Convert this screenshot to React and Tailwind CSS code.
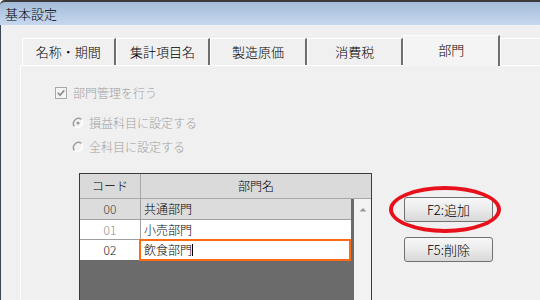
import React from "react";

function Tab({ w, label, selected }) {
  if (selected) {
    return (
      <div className={`${w} h-[31px] -mb-px relative z-10 bg-[#f4f4f4] border-t border-l border-white border-r-2 border-r-[#6e6e6e] flex items-start justify-center pt-[6px] text-[13px] leading-[16px]`}>
        {label}
      </div>
    );
  }
  return (
    <div className={`${w} h-[27px] bg-[#f0f0f0] border-t border-l border-white border-r-2 border-r-[#6e6e6e] flex items-center justify-center text-[13px] leading-[16px]`}>
      {label}
    </div>
  );
}

function Radio({ checked }) {
  return (
    <svg width="12" height="12" viewBox="0 0 12 12" className="shrink-0">
      <circle cx="6" cy="6" r="5" fill="#f4f4f4" />
      <path d="M9.5 2.5 A5 5 0 0 0 2.5 9.5" fill="none" stroke="#9a9a9a" strokeWidth="1.4" />
      <path d="M2.5 9.5 A5 5 0 0 0 9.5 2.5" fill="none" stroke="#ffffff" strokeWidth="1.2" />
      {checked && <circle cx="6" cy="6" r="1.6" fill="#9a9a9a" />}
    </svg>
  );
}

export default function App() {
  return (
    <div className="w-[540px] h-[300px] overflow-hidden bg-[#f0f0f0] flex flex-col font-['Noto_Sans_CJK_JP','Liberation_Sans',sans-serif] font-light text-[12px] text-black">
      {/* Title bar */}
      <div className="h-[25px] shrink-0 border-t-2 border-[#3a3a3a] rounded-tl-[5px] bg-gradient-to-b from-[#a4bcd9] to-[#c6d8ee] flex items-center pl-[5px] text-[13px] leading-none">
        基本設定
      </div>
      {/* Body */}
      <div className="flex-1 border-l border-[#3c4656] pl-[19px] pt-[10px] flex flex-col">
        {/* Tabs */}
        <div className="flex items-end ml-[2px] h-[30px]">
          <Tab w="w-[98px]" label="名称・期間" />
          <Tab w="w-[99px]" label="集計項目名" />
          <Tab w="w-[101px]" label="製造原価" />
          <Tab w="w-[101px]" label="消費税" />
          <Tab w="w-[101px]" label="部門" selected />
          <div className="w-[40px] h-[27px] shrink-0 bg-[#f0f0f0] border-t border-l border-white" />
        </div>
        {/* Panel */}
        <div className="flex-1 border-t border-l border-white pl-[34px] flex flex-col">
          <div className="mt-[20px] h-[14px] flex items-center gap-[6px] text-[#a0a0a0] leading-none">
            <svg width="12" height="12" viewBox="0 0 12 12" className="shrink-0">
              <rect x="0.5" y="0.5" width="11" height="11" fill="#f4f4f4" stroke="#a8a8a8" />
              <path d="M2.8 5.8 L5 8.2 L9.3 3.3" fill="none" stroke="#8c8c8c" strokeWidth="1.7" />
            </svg>
            <span>部門管理を行う</span>
          </div>
          <div className="mt-[16px] ml-[17px] h-[14px] flex items-center gap-[5px] text-[#a0a0a0] leading-none">
            <Radio checked />
            <span>損益科目に設定する</span>
          </div>
          <div className="mt-[10px] ml-[17px] h-[14px] flex items-center gap-[5px] text-[#a0a0a0] leading-none">
            <Radio />
            <span>全科目に設定する</span>
          </div>
          {/* Grid + buttons */}
          <div className="mt-[19px] ml-[24px] flex items-start">
            <div className="w-[293px] h-[200px] border-t border-l border-r border-[#3a3a3a] flex flex-col">
              <div className="h-[25px] shrink-0 flex bg-[#dadada] border-b border-[#a8a8a8] text-[12px] leading-none">
                <div className="w-[61px] border-r border-[#a8a8a8] flex items-center justify-center">コード</div>
                <div className="flex-1 flex items-center justify-center">部門名</div>
              </div>
              <div className="flex-1 flex bg-[#6b6b6b]">
                <div className="w-[271px] flex flex-col">
                  <div className="h-[21px] flex bg-[#dcdcdc] border-b border-[#a0a0a0] leading-none">
                    <div className="w-[61px] border-r border-[#a0a0a0] flex items-center justify-center text-[#404040]">00</div>
                    <div className="flex-1 flex items-center pl-[3px]">共通部門</div>
                  </div>
                  <div className="h-[20px] flex bg-white border-b border-[#a0a0a0] leading-none">
                    <div className="w-[61px] border-r border-[#a0a0a0] flex items-center justify-center text-[#8c8c8c]">01</div>
                    <div className="flex-1 flex items-center pl-[3px]">小売部門</div>
                  </div>
                  <div className="h-[20px] flex bg-white leading-none">
                    <div className="w-[61px] border-r border-[#a0a0a0] flex items-center justify-center text-[#202020]">02</div>
                    <div className="flex-1 flex items-center pl-[3px] relative">
                      <span>飲食部門</span>
                      <span className="w-px h-[12px] bg-black" />
                      <div className="absolute -left-[2px] -top-px right-0 -bottom-px border-2 border-[#ff6a13]" />
                    </div>
                  </div>
                </div>
                <div className="ml-auto w-[17px] bg-[#f3f3f3] flex justify-center pt-[8px]">
                  <svg width="8" height="5" viewBox="0 0 8 5">
                    <path d="M0.5 4.5 L4 1 L7.5 4.5 Z" fill="#9a9a9a" />
                  </svg>
                </div>
              </div>
            </div>
            <div className="ml-[32px] mt-[24px] flex flex-col gap-[15px]">
              <div className="relative">
                <div className="w-[89px] h-[25px] border border-[#707070] rounded-[3px] bg-gradient-to-b from-[#f7f7f7] via-[#ebebeb] to-[#d8d8d8] flex items-center justify-center text-[13px] leading-none">
                  F2:追加
                </div>
                <div className="absolute left-[-15px] top-[-11px] w-[112px] h-[47px] rounded-[50%] border-[4px] border-[#e8101a]" />
              </div>
              <div className="w-[89px] h-[25px] border border-[#707070] rounded-[3px] bg-gradient-to-b from-[#f7f7f7] via-[#ebebeb] to-[#d8d8d8] flex items-center justify-center text-[13px] leading-none">
                F5:削除
              </div>
            </div>
          </div>
        </div>
      </div>
    </div>
  );
}
